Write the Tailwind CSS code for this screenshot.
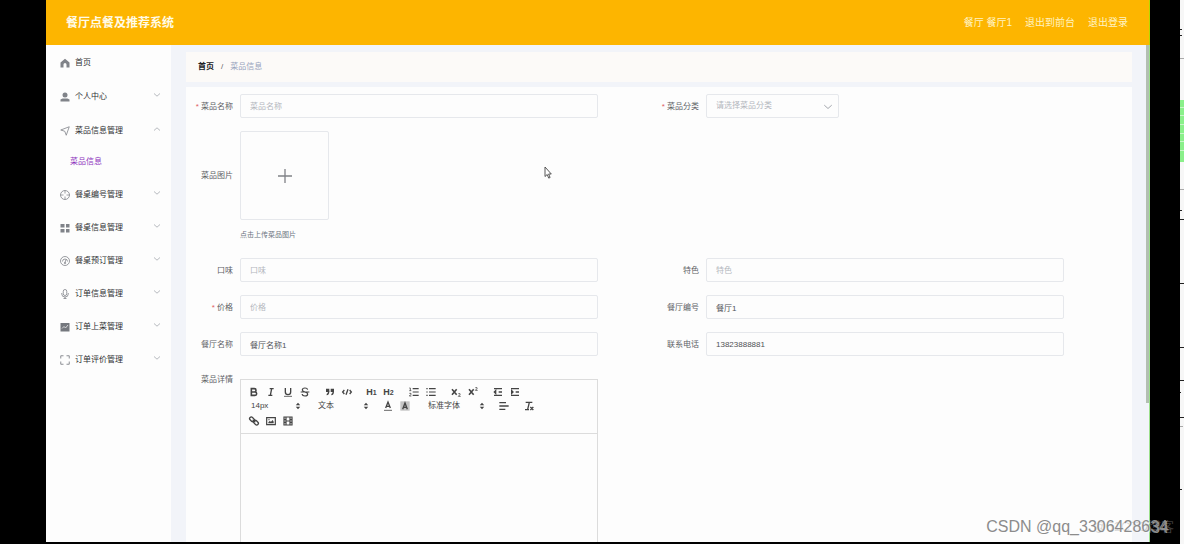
<!DOCTYPE html>
<html lang="zh-CN">
<head>
<meta charset="utf-8">
<meta name="viewport" content="width=device-width, initial-scale=1">
<title>餐厅点餐及推荐系统</title>
<script src="https://cdn.jsdelivr.net/npm/@tailwindcss/browser@4"></script>
</head>
<body class="relative flex h-screen overflow-hidden bg-black pb-0.5 pl-[46px] font-['Liberation_Sans','Noto_Sans_CJK_SC',sans-serif] text-[8px] leading-3 text-[#606266]">

<svg class="hidden" aria-hidden="true">
  <symbol id="down" viewBox="0 0 8 8"><path d="M1 2.5 4 5.2 7 2.5" fill="none" stroke="currentColor" stroke-width=".8"/></symbol>
  <symbol id="updown" viewBox="0 0 18 18"><path d="M5 7.5 9 3l4 4.500zM5 10.500 9 15l4-4.500z" fill="currentColor"/></symbol>
</svg>

<div class="flex min-w-0 flex-1 flex-col bg-[#f2f4f9]">
  <header class="flex h-[45px] shrink-0 items-center justify-between border-r border-[#b8d800] bg-[#fdb500] pr-[21px] pl-5 text-[#fffbe8]">
    <h1 class="text-[12px] leading-4 font-bold">餐厅点餐及推荐系统</h1>
    <nav class="flex gap-[13px] text-[10px] leading-3 text-[#fff3c4]">
      <span>餐厅 餐厅1</span>
      <a href="#">退出到前台</a>
      <a href="#">退出登录</a>
    </nav>
  </header>

  <div class="flex min-h-0 flex-1">
    <aside class="w-[125px] shrink-0 bg-[#fdfdfd] pt-px text-[#303133]">
      <nav>
        <a href="#" class="flex h-[34px] items-center gap-[5px] pr-2.5 pl-3.5">
          <svg class="size-2.5 text-[#808389]" viewBox="0 0 20 20"><path d="M10 1.500 19 9v10h-6v-6a3 3 0 0 0-6 0v6H1V9z" fill="currentColor"/></svg>首页</a>
        <a href="#" class="flex h-[34px] items-center gap-[5px] pr-2.5 pl-3.5">
          <svg class="size-2.5 text-[#808389]" viewBox="0 0 20 20"><circle cx="10" cy="6" r="5" fill="currentColor"/><path d="M1 19v-4l4-2h10l4 2v4z" fill="currentColor"/></svg>个人中心
          <svg class="mb-1 ml-auto size-2 text-[#a5a8ae]"><use href="#down"/></svg></a>
        <a href="#" class="flex h-[34px] items-center gap-[5px] pr-2.5 pl-3.5">
          <svg class="size-2.5 text-[#808389]" viewBox="0 0 20 20"><path d="M1.500 8 18.500 1.500 12.500 18.500 9.500 10.500z" fill="none" stroke="currentColor" stroke-width="1.600"/></svg>菜品信息管理
          <svg class="mb-1 ml-auto size-2 rotate-180 text-[#a5a8ae]"><use href="#down"/></svg></a>
        <a href="#" class="mb-[3px] flex h-[27px] items-center pl-6 text-[#8e35bd]">菜品信息</a>
        <a href="#" class="flex h-[33px] items-center gap-[5px] pr-2.5 pl-3.5">
          <svg class="size-2.5 text-[#808389]" viewBox="0 0 20 20"><path d="M10 1v6m0 6v6M1 10h6m6 0h6" stroke="currentColor" stroke-width="1.500"/><circle cx="10" cy="10" r="9" fill="none" stroke="currentColor" stroke-width="1.600"/></svg>餐桌编号管理
          <svg class="mb-1 ml-auto size-2 text-[#a5a8ae]"><use href="#down"/></svg></a>
        <a href="#" class="flex h-[33px] items-center gap-[5px] pr-2.5 pl-3.5">
          <svg class="size-2.5 text-[#808389]" viewBox="0 0 20 20"><path d="M1 2h8v7H1zM12 2h7v7h-7zM1 12h8v7H1zM12 12h7v7h-7z" fill="currentColor"/></svg>餐桌信息管理
          <svg class="mb-1 ml-auto size-2 text-[#a5a8ae]"><use href="#down"/></svg></a>
        <a href="#" class="flex h-[33px] items-center gap-[5px] pr-2.5 pl-3.5">
          <svg class="size-2.5 text-[#808389]" viewBox="0 0 20 20"><g fill="none" stroke="currentColor" stroke-width="1.600"><circle cx="10" cy="10" r="9"/><path d="M5 11a5 5 0 0 1 10 0M12 7l-2 6"/><circle cx="10" cy="14" r="1.500"/></g></svg>餐桌预订管理
          <svg class="mb-1 ml-auto size-2 text-[#a5a8ae]"><use href="#down"/></svg></a>
        <a href="#" class="flex h-[33px] items-center gap-[5px] pr-2.5 pl-3.5">
          <svg class="size-2.5 text-[#808389]" viewBox="0 0 20 20"><g fill="none" stroke="currentColor" stroke-width="1.600"><rect x="6.500" y="1" width="7" height="12" rx="3.500"/><path d="M3.500 8v2a6.500 6 0 0 0 13 0V8M10 16v3M7 19h6"/></g></svg>订单信息管理
          <svg class="mb-1 ml-auto size-2 text-[#a5a8ae]"><use href="#down"/></svg></a>
        <a href="#" class="flex h-[33px] items-center gap-[5px] pr-2.5 pl-3.5">
          <svg class="size-2.5 text-[#75787e]" viewBox="0 0 20 20"><path d="M1 2h18v17H1z" fill="currentColor"/><path d="m4 13 4-4 3 3 5-6" fill="none" stroke="#fff" stroke-width="1.400"/></svg>订单上菜管理
          <svg class="mb-1 ml-auto size-2 text-[#a5a8ae]"><use href="#down"/></svg></a>
        <a href="#" class="flex h-[33px] items-center gap-[5px] pr-2.5 pl-3.5">
          <svg class="size-2.5 text-[#808389]" viewBox="0 0 20 20"><path d="M1.500 7V1.500H7M13 1.500h5.500V7M18.500 13v5.500H13M7 18.500H1.500V13" fill="none" stroke="currentColor" stroke-width="1.800"/></svg>订单评价管理
          <svg class="mb-1 ml-auto size-2 text-[#a5a8ae]"><use href="#down"/></svg></a>
      </nav>
    </aside>

    <main class="flex min-w-0 flex-1 flex-col gap-[5px] overflow-hidden pt-[7px] pr-3.5 pl-[15px]">
      <nav class="flex h-[30px] shrink-0 items-center gap-[7px] bg-[#fcfaf8] pl-3" aria-label="面包屑">
        <a href="#" class="font-bold text-[#202124]">首页</a><span>/</span><span class="text-[#98a3bd]">菜品信息</span>
      </nav>

      <form class="grid flex-1 grid-cols-2 content-start gap-y-[13px] bg-[#fdfdfd] pt-[7px] pr-3.5">
        <div class="flex items-center pr-[54px]">
          <label for="name" class="w-[54px] shrink-0 pt-0.5 pr-[7px] text-right"><span class="text-[#e06060]">*</span> 菜品名称</label>
          <input id="name" placeholder="菜品名称" class="h-6 w-full min-w-0 rounded-xs border border-[#e6e8ec] px-[9px] placeholder:text-[#b4b7bd]">
        </div>
        <div class="flex items-center pr-[54px]">
          <label for="kind" class="w-[54px] shrink-0 pt-0.5 pr-[7px] text-right"><span class="text-[#e06060]">*</span> 菜品分类</label>
          <div class="relative w-[133px]">
            <select id="kind" class="h-6 w-full appearance-none rounded-xs border border-[#e6e8ec] px-[9px] text-[#b4b7bd]"><option>请选择菜品分类</option></select>
            <svg class="pointer-events-none absolute top-2 right-1.5 size-2.5 text-[#a5a8ae]"><use href="#down"/></svg>
          </div>
        </div>

        <div class="col-span-2 flex pb-1">
          <span id="photo" class="flex h-[89px] w-[54px] shrink-0 items-center justify-end pr-[7px]">菜品图片</span>
          <div>
            <button type="button" aria-labelledby="photo" class="flex size-[89px] items-center justify-center rounded-xs border border-[#e6e8ec]">
              <svg class="size-[14px] text-[#808287]" viewBox="0 0 14 14"><path d="M7 0v14M0 7h14" stroke="currentColor" stroke-width="1.300"/></svg>
            </button>
            <p class="mt-[9px] text-[7px] text-[#6b7480]">点击上传菜品图片</p>
          </div>
        </div>

        <div class="flex items-center pr-[54px]">
          <label for="taste" class="w-[54px] shrink-0 pt-0.5 pr-[7px] text-right">口味</label>
          <input id="taste" placeholder="口味" class="h-6 w-full min-w-0 rounded-xs border border-[#e6e8ec] px-[9px] placeholder:text-[#b4b7bd]">
        </div>
        <div class="flex items-center pr-[54px]">
          <label for="feature" class="w-[54px] shrink-0 pt-0.5 pr-[7px] text-right">特色</label>
          <input id="feature" placeholder="特色" class="h-6 w-full min-w-0 rounded-xs border border-[#e6e8ec] px-[9px] placeholder:text-[#b4b7bd]">
        </div>
        <div class="flex items-center pr-[54px]">
          <label for="price" class="w-[54px] shrink-0 pt-0.5 pr-[7px] text-right"><span class="text-[#e06060]">*</span> 价格</label>
          <input id="price" placeholder="价格" class="h-6 w-full min-w-0 rounded-xs border border-[#e6e8ec] px-[9px] placeholder:text-[#b4b7bd]">
        </div>
        <div class="flex items-center pr-[54px]">
          <label for="number" class="w-[54px] shrink-0 pt-0.5 pr-[7px] text-right">餐厅编号</label>
          <input id="number" value="餐厅1" class="h-6 w-full min-w-0 rounded-xs border border-[#e6e8ec] px-[9px] text-[#505256]">
        </div>
        <div class="flex items-center pr-[54px]">
          <label for="shop" class="w-[54px] shrink-0 pt-0.5 pr-[7px] text-right">餐厅名称</label>
          <input id="shop" value="餐厅名称1" class="h-6 w-full min-w-0 rounded-xs border border-[#e6e8ec] px-[9px] text-[#505256]">
        </div>
        <div class="flex items-center pr-[54px]">
          <label for="phone" class="w-[54px] shrink-0 pt-0.5 pr-[7px] text-right">联系电话</label>
          <input id="phone" value="13823888881" class="h-6 w-full min-w-0 rounded-xs border border-[#e6e8ec] px-[9px] text-[#505256]">
        </div>

        <div class="flex items-start pt-[5px] pr-[54px]">
          <label for="detail" class="w-[54px] shrink-0 pr-[7px] text-right">菜品详情</label>
          <div class="mt-[5px] min-w-0 flex-1 border border-[#dcdcdc] text-[#444]">
            <div class="flex h-[54px] flex-col border-b border-[#dcdcdc] pt-[5px] pl-1">
              <div class="flex h-[14px] gap-2">
                <div class="flex">
                  <button type="button" aria-label="加粗" class="flex w-[17px] items-center justify-center"><svg class="size-3" viewBox="0 0 18 18" fill="none" stroke="currentColor" stroke-width="2.400"><path d="M5 4h4.500a2.500 2.500 0 0 1 0 5H5zM5 9h5.500a2.500 2.500 0 0 1 0 5H5z"/></svg></button>
                  <button type="button" aria-label="斜体" class="flex w-[17px] items-center justify-center"><svg class="size-3" viewBox="0 0 18 18" fill="none" stroke="currentColor" stroke-width="2"><path d="M7 4h6M5 14h6M8 14l2-10"/></svg></button>
                  <button type="button" aria-label="下划线" class="flex w-[17px] items-center justify-center"><svg class="size-3" viewBox="0 0 18 18" fill="none" stroke="currentColor" stroke-width="2"><path d="M5 3v6a4 4 0 0 0 8 0V3"/><path d="M3 15.500h12" stroke-width="1.200"/></svg></button>
                  <button type="button" aria-label="删除线" class="flex w-[17px] items-center justify-center"><svg class="size-3" viewBox="0 0 18 18" fill="none" stroke="currentColor" stroke-width="1.800"><path d="M2.500 9h13M13 5.500C12.500 3.500 10.500 3 9 3 6.500 3 5 4.500 5 6c0 4 8 2 8 6 0 1.800-1.500 3-4 3s-4-1-4.300-3"/></svg></button>
                </div>
                <div class="flex">
                  <button type="button" aria-label="引用" class="flex w-[17px] items-center justify-center"><svg class="size-3" viewBox="0 0 18 18" fill="currentColor" stroke="currentColor" stroke-width="2"><path d="M4 5h3v3H4zM11 5h3v3h-3z"/><path d="M7 8c0 3-1 5-3 5M14 8c0 3-1 5-3 5" fill="none"/></svg></button>
                  <button type="button" aria-label="代码" class="flex w-[17px] items-center justify-center"><svg class="size-3" viewBox="0 0 18 18" fill="none" stroke="currentColor" stroke-width="2"><path d="M5 6 2.500 9 5 12M13 6l2.500 3-2.500 3M10.500 5l-3 8"/></svg></button>
                </div>
                <div class="flex">
                  <button type="button" class="w-[17px] text-[9px] leading-[14px] font-bold">H<span class="text-[7px]">1</span></button>
                  <button type="button" class="w-[17px] text-[9px] leading-[14px] font-bold">H<span class="text-[7px]">2</span></button>
                </div>
                <div class="flex">
                  <button type="button" aria-label="有序列表" class="flex w-[17px] items-center justify-center"><svg class="size-3" viewBox="0 0 18 18" fill="none" stroke="currentColor" stroke-width="1.800"><path d="M7 4h9M7 9h9M7 14h9"/><path d="M2 3h1.500v4M2 7h3M2 11h2.500v1.500L2 15h3" stroke-width="1.200"/></svg></button>
                  <button type="button" aria-label="无序列表" class="flex w-[17px] items-center justify-center"><svg class="size-3" viewBox="0 0 18 18" fill="none" stroke="currentColor" stroke-width="1.800"><path d="M6 4h10M6 9h10M6 14h10M2 4h2M2 9h2M2 14h2"/></svg></button>
                </div>
                <div class="flex">
                  <button type="button" aria-label="下标" class="flex w-[17px] items-center justify-center"><svg class="size-3" viewBox="0 0 18 18" fill="none" stroke="currentColor" stroke-width="2.400"><path d="m3 5 7 8M10 5l-7 8"/><path d="M12.500 11.500h2.500v1.500L12.500 15.500h3.500" stroke-width="1.200"/></svg></button>
                  <button type="button" aria-label="上标" class="flex w-[17px] items-center justify-center"><svg class="size-3" viewBox="0 0 18 18" fill="none" stroke="currentColor" stroke-width="2.400"><path d="m3 5 7 8M10 5l-7 8"/><path d="M12.500 2.500h2.500v1.500L12.500 6.500h3.500" stroke-width="1.200"/></svg></button>
                </div>
                <div class="flex">
                  <button type="button" aria-label="减少缩进" class="flex w-[17px] items-center justify-center"><svg class="size-3" viewBox="0 0 18 18" fill="none" stroke="currentColor" stroke-width="2"><path d="M3 4h12M3 14h12M10 9h5M5.500 7v4L3.500 9z"/></svg></button>
                  <button type="button" aria-label="增加缩进" class="flex w-[17px] items-center justify-center"><svg class="size-3" viewBox="0 0 18 18" fill="none" stroke="currentColor" stroke-width="2"><path d="M3 4h12M3 14h12M10 9h5M4 7v4l2-2z"/></svg></button>
                </div>
              </div>
              <div class="flex h-[14px] gap-2">
                <div class="relative w-[58px]">
                  <select aria-label="字号" class="h-full w-full appearance-none pl-1.5"><option>14px</option></select>
                  <svg class="pointer-events-none absolute top-0.5 right-0 size-2.5"><use href="#updown"/></svg>
                </div>
                <div class="relative w-[60px]">
                  <select aria-label="标题" class="h-full w-full appearance-none pl-[7px]"><option>文本</option></select>
                  <svg class="pointer-events-none absolute top-0.5 right-0 size-2.5"><use href="#updown"/></svg>
                </div>
                <div class="flex">
                  <button type="button" aria-label="文字颜色" class="flex w-[17px] items-center justify-center"><svg class="size-3" viewBox="0 0 18 18" fill="none" stroke="currentColor" stroke-width="2"><path d="M5.500 12 9 3l3.500 9M6.500 9.500h5"/><path d="M3 15.500h12" stroke-width="1.200"/></svg></button>
                  <button type="button" aria-label="背景颜色" class="flex w-[17px] items-center justify-center"><svg class="size-3" viewBox="0 0 18 18" fill="none" stroke="currentColor" stroke-width="2"><path d="M2 2h14v14H2z" fill="#c4c4c4" stroke="none"/><path d="M5.500 14 9 4.500l3.500 9.500M6.500 11h5"/></svg></button>
                </div>
                <div class="relative w-[66px]">
                  <select aria-label="字体" class="h-full w-full appearance-none pl-[7px]"><option>标准字体</option></select>
                  <svg class="pointer-events-none absolute top-0.5 right-0 size-2.5"><use href="#updown"/></svg>
                </div>
                <button type="button" aria-label="对齐" class="flex w-[17px] items-center justify-center"><svg class="size-3" viewBox="0 0 18 18" fill="none" stroke="currentColor" stroke-width="2"><path d="M2 4h10M2 9h14M2 14h9"/></svg></button>
                <button type="button" aria-label="清除格式" class="flex w-[17px] items-center justify-center"><svg class="size-3" viewBox="0 0 18 18" fill="none" stroke="currentColor" stroke-width="2"><path d="M4 3.500h10M9.500 3.500 7 14M3 14.500h6M11 10.500l4.500 4.500M15.500 10.500 11 15"/></svg></button>
              </div>
              <div class="flex h-[15px]">
                <button type="button" aria-label="链接" class="flex w-[17px] items-center justify-center"><svg class="size-3" viewBox="0 0 18 18" fill="none" stroke="currentColor" stroke-width="2"><path d="m7 7 4 4"/><rect x="2" y="4" width="8" height="5" rx="2.500" transform="rotate(45 6 6.500)"/><rect x="8" y="9" width="8" height="5" rx="2.500" transform="rotate(45 12 11.500)"/></svg></button>
                <button type="button" aria-label="图片" class="flex w-[17px] items-center justify-center"><svg class="size-3" viewBox="0 0 18 18" fill="none" stroke="currentColor" stroke-width="1.800"><path d="M2.500 4h13v10.500h-13z"/><path d="M5 12.500V11l2-2 2 1 2.500-2.500L13 10v2.500z" fill="currentColor" stroke="none"/><circle cx="6" cy="7" r="1" fill="currentColor" stroke="none"/></svg></button>
                <button type="button" aria-label="视频" class="flex w-[17px] items-center justify-center"><svg class="size-3" viewBox="0 0 18 18" fill="none" stroke="currentColor" stroke-width="1.800"><path d="M3 3h12v12H3zM6 3v12M12 3v12M6 9h6M3 7h3M3 11h3M12 7h3M12 11h3"/></svg></button>
              </div>
            </div>
            <textarea id="detail" class="block h-[170px] w-full resize-none p-2"></textarea>
          </div>
        </div>
      </form>
    </main>

    <div class="flex w-1 shrink-0 flex-col border-r border-[#9ce08c]" aria-hidden="true">
      <div class="h-[72%] bg-[#b3bfb2]"></div>
    </div>
  </div>
</div>

<div class="w-[30px] shrink-0 bg-black"></div>
<div class="-mb-0.5 w-1 shrink-0 bg-[#f7f7f7]" aria-hidden="true">
  <svg class="block" width="4" height="544" viewBox="0 0 4 544">
    <path d="M0 100h4v62H0z" fill="#8af08a"/>
    <path d="M0 107.500h4m-4 8h4m-4 9h4m-4 9h4m-4 8h4m-4 9h4" stroke="#c9f5c9"/>
    <path d="M0 29.500h2m-2 6h2m-2 175h2m-2 9h4m-4 64h4m-4 64h4m-4 33h4m-4 12h1m-1 25h4m-4 72h2" stroke="#222"/>
    <path d="M0 58.500h4m-4 131h4m-4 237h3" stroke="#aaa"/>
  </svg>
</div>

<svg class="absolute top-[166px] left-[544px] h-[13px] w-2" viewBox="0 0 8 13" aria-hidden="true"><path d="M1 1v9.500l2.200-2 1.500 3.600 1.400-.6-1.500-3.500H7.300z" fill="#fff" stroke="#444" stroke-width=".9"/></svg>
<p class="absolute right-2.5 bottom-[7px] text-[13px] leading-5 text-[#999]/40">@51CTO博客</p>
<p class="absolute right-4 bottom-[7px] text-[16px] leading-5 text-[#8c8c8c] [text-shadow:1px_1px_0_#ffffff80]">CSDN @qq_3306428634</p>
</body>
</html>
